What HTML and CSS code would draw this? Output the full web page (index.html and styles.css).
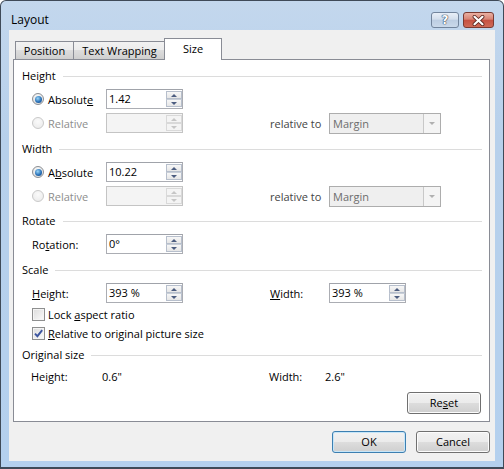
FILE: index.html
```html
<!DOCTYPE html>
<html>
<head>
<meta charset="utf-8">
<title>Layout</title>
<link rel="stylesheet" href="styles.css">
</head>
<body>
<div class="window">
  <div class="titlebar">
    <span class="title">Layout</span>
    <div class="caption">
      <span class="cbtn help">?</span>
      <span class="cbtn close"><svg width="13" height="11" viewBox="0 0 13 11"><path d="M2.5 1.8 L10.5 9.2 M10.5 1.8 L2.5 9.2" stroke="#5a2620" stroke-width="3.8" stroke-linecap="round"/><path d="M2.5 1.8 L10.5 9.2 M10.5 1.8 L2.5 9.2" stroke="#fff" stroke-width="2.2" stroke-linecap="round"/></svg></span>
    </div>
  </div>
  <div class="client">
    <div class="tabs">
      <div class="tab tab-pos">Position</div>
      <div class="tab tab-wrap">Text Wrapping</div>
      <div class="tab tab-size active">Size</div>
    </div>
    <div class="panel">
      <section class="group">
        <div class="ghead"><span>Height</span><i class="rule"></i></div>
        <div class="row">
          <label class="opt"><span class="radio on"></span><span>Absolut<u>e</u></span></label>
          <div class="spin"><span class="val">1.42</span><span class="sbtns"><span class="sb"><i class="up"></i></span><span class="sb"><i class="down"></i></span></span></div>
        </div>
        <div class="row">
          <label class="opt dis"><span class="radio off"></span><span>Relative</span></label>
          <div class="spin dis"><span class="val"></span><span class="sbtns"><span class="sb"><i class="up"></i></span><span class="sb"><i class="down"></i></span></span></div>
          <span class="rel">relative to</span>
          <div class="combo"><span class="ctext">Margin</span><span class="carrow"><i class="down"></i></span></div>
        </div>
      </section>

      <section class="group g-width">
        <div class="ghead"><span>Width</span><i class="rule"></i></div>
        <div class="row">
          <label class="opt"><span class="radio on"></span><span>A<u>b</u>solute</span></label>
          <div class="spin"><span class="val">10.22</span><span class="sbtns"><span class="sb"><i class="up"></i></span><span class="sb"><i class="down"></i></span></span></div>
        </div>
        <div class="row">
          <label class="opt dis"><span class="radio off"></span><span>Relative</span></label>
          <div class="spin dis"><span class="val"></span><span class="sbtns"><span class="sb"><i class="up"></i></span><span class="sb"><i class="down"></i></span></span></div>
          <span class="rel">relative to</span>
          <div class="combo"><span class="ctext">Margin</span><span class="carrow"><i class="down"></i></span></div>
        </div>
      </section>

      <section class="group g-rotate">
        <div class="ghead"><span>Rotate</span><i class="rule"></i></div>
        <div class="row">
          <label class="opt"><span>Ro<u>t</u>ation:</span></label>
          <div class="spin"><span class="val">0°</span><span class="sbtns"><span class="sb"><i class="up"></i></span><span class="sb"><i class="down"></i></span></span></div>
        </div>
      </section>

      <section class="group g-scale">
        <div class="ghead"><span>Scale</span><i class="rule"></i></div>
        <div class="row">
          <label class="opt"><span><u>H</u>eight:</span></label>
          <div class="spin"><span class="val">393 %</span><span class="sbtns"><span class="sb"><i class="up"></i></span><span class="sb"><i class="down"></i></span></span></div>
          <label class="rel plain-dark"><span><u>W</u>idth:</span></label>
          <div class="spin"><span class="val">393 %</span><span class="sbtns"><span class="sb"><i class="up"></i></span><span class="sb"><i class="down"></i></span></span></div>
        </div>
        <div class="crow">
          <span class="check"></span><span>Lock <u>a</u>spect ratio</span>
        </div>
        <div class="crow">
          <span class="check on"><svg width="11" height="11" viewBox="0 0 11 11"><path d="M2 5.6 L4.4 8.2 L9.2 2.2" fill="none" stroke="#3d56a0" stroke-width="1.9"/></svg></span><span><u>R</u>elative to original picture size</span>
        </div>
      </section>

      <section class="group g-orig">
        <div class="ghead"><span>Original size</span><i class="rule"></i></div>
        <div class="vrow">
          <span>Height:</span><span>0.6"</span><span>Width:</span><span>2.6"</span>
        </div>
      </section>

      <div class="reset-row"><button class="btn">Re<u>s</u>et</button></div>
    </div>
    <div class="footer">
      <button class="btn default">OK</button>
      <button class="btn">Cancel</button>
    </div>
  </div>
</div>
</body>
</html>
```

FILE: styles.css
```css
* { box-sizing: border-box; }

body {
  margin: 0;
  font-family: "Open Sans", "Noto Sans", sans-serif;
  font-size: 11px;
  color: #000;
  background: #fff;
}

.window {
  width: 504px;
  height: 469px;
  display: flex;
  flex-direction: column;
  background: linear-gradient(#c3d7ed, #b7d0eb 30%, #b4d0ee);
  border: 1px solid #3f4a58;
  border-bottom-width: 2px;
  border-radius: 6px 6px 0 0;
  padding: 0 8px 6px 8px;
}

/* ---------- title bar ---------- */
.titlebar {
  height: 29px;
  display: flex;
  justify-content: space-between;
  align-items: flex-start;
  padding: 11px 1px 0 2px;
}
.title {
  font-size: 12px;
  line-height: 16px;
  color: #000;
}
.caption {
  display: flex;
  gap: 4px;
}
.cbtn {
  height: 16px;
  border-radius: 3px;
  display: flex;
  align-items: center;
  justify-content: center;
}
.help {
  width: 28px;
  border: 1px solid #72849c;
  background: linear-gradient(#e8eff8, #d3deec 45%, #bccde2 50%, #cad9ea);
  color: #fff;
  font-family: "DejaVu Sans", sans-serif;
  font-weight: bold;
  font-size: 12px;
  line-height: 14px;
  text-shadow: 0 0 1px #2d3c55, 0 0 1px #2d3c55, 0 0 1px #2d3c55;
}
.close {
  width: 31px;
  border: 1px solid #7a3a32;
  background: linear-gradient(#eab0a3, #d78374 45%, #c65142 50%, #cf6a58);
}

/* ---------- client ---------- */
.client {
  flex: 1;
  background: #f0f0f0;
  display: flex;
  flex-direction: column;
  padding: 8px 5px 0 4px;
}

.tabs {
  display: flex;
  align-items: flex-end;
  height: 22px;
  margin-left: 2px;
  margin-bottom: -1px;
  z-index: 1;
}
.tab {
  height: 18px;
  margin-bottom: 1px;
  border: 1px solid #898c95;
  border-bottom: none;
  background: linear-gradient(#f2f2f2, #ebebeb 50%, #dddddd 50%, #cfcfcf);
  display: flex;
  align-items: center;
  justify-content: center;
  line-height: 16px;
}
.tab-pos { width: 59px; }
.tab-wrap { width: 93px; margin-left: -1px; }
.tab-size {
  width: 58px;
  margin-left: -2px;
  height: 22px;
  margin-bottom: 0;
  background: #fff;
  padding-bottom: 2px;
}

.panel {
  width: 477px;
  height: 363px;
  background: #fff;
  border: 1px solid #898c95;
  padding: 8px 7px 0 8px;
  display: flex;
  flex-direction: column;
}

/* ---------- groups ---------- */
.ghead {
  height: 16px;
  display: flex;
  align-items: center;
  gap: 7px;
  margin-bottom: 3px;
  line-height: 16px;
}
.rule {
  flex: 1;
  height: 1px;
  background: #dcdcdc;
  margin-top: 1px;
}
.g-width { margin-top: 6px; }
.g-rotate { margin-top: 5px; }
.g-scale { margin-top: 6px; }
.g-orig { margin-top: 4px; }

.row {
  display: grid;
  grid-template-columns: 74px 77px 87px 59px 112px;
  align-items: center;
  height: 24px;
  margin-left: 10px;
}
.opt {
  display: flex;
  align-items: center;
  gap: 4px;
  white-space: nowrap;
}
.opt.dis { color: #8d8d8d; }
.rel {
  grid-column: 4;
  color: #444;
  white-space: nowrap;
}
.plain-dark { color: #000; }
.row .combo, .row .rel + .spin { grid-column: 5; }

/* radio */
.radio {
  width: 12px;
  height: 12px;
  border-radius: 50%;
  border: 1px solid #8b8e93;
  background: radial-gradient(circle at 50% 35%, #fff, #dfdfdf 80%);
  display: flex;
  align-items: center;
  justify-content: center;
  flex: none;
}
.radio.on::after {
  content: "";
  width: 7px;
  height: 7px;
  border-radius: 50%;
  background: radial-gradient(circle at 40% 35%, #9ad6f8, #2a72b8 55%, #0f3f7c);
}
.radio.off {
  border-color: #c9c9c9;
  background: radial-gradient(circle at 50% 35%, #fafafa, #ececec 80%);
}

/* spin edit */
.spin {
  width: 77px;
  height: 20px;
  display: flex;
  border: 1px solid #abadb3;
  border-top-color: #a0a3aa;
  background: #fff;
}
.spin .val {
  flex: 1;
  padding-left: 2px;
  line-height: 18px;
}
.sbtns {
  width: 16px;
  display: flex;
  flex-direction: column;
  padding: 1px 0;
}
.sb {
  flex: 1;
  border: 1px solid #b7bfcc;
  background: linear-gradient(#f7f7f7, #e6e6e6);
  display: flex;
  align-items: center;
  justify-content: center;
}
.sb + .sb { border-top-color: #c9cfd8; }
.up, .down {
  width: 0;
  height: 0;
  border-left: 3px solid transparent;
  border-right: 3px solid transparent;
}
.up { border-bottom: 3px solid #4c5d80; }
.down { border-top: 3px solid #4c5d80; }

.spin.dis {
  background: #f4f4f4;
  border-color: #c4c4c4;
}
.spin.dis .sb {
  border-color: #d9d9d9;
  background: #f4f4f4;
}
.spin.dis .up { border-bottom-color: #c6c6c6; }
.spin.dis .down { border-top-color: #c6c6c6; }

/* combo */
.combo {
  width: 112px;
  height: 21px;
  display: flex;
  border: 1px solid #adadad;
  background: #efefef;
}
.ctext {
  flex: 1;
  color: #6d6d6d;
  padding-left: 3px;
  line-height: 19px;
}
.carrow {
  width: 17px;
  border-left: 1px solid #c8c8c8;
  background: #f4f4f4;
  display: flex;
  align-items: center;
  justify-content: center;
}
.carrow .down { border-top-color: #b0b0b0; }

/* checkboxes */
.crow {
  height: 19px;
  display: flex;
  align-items: center;
  gap: 3px;
  margin-left: 10px;
}
.check {
  width: 13px;
  height: 13px;
  border: 1px solid #8e8f8f;
  background: linear-gradient(135deg, #dcdcdc, #fbfbfb);
  box-shadow: inset 0 0 0 1px #f4f4f4;
  display: flex;
  align-items: center;
  justify-content: center;
}

/* original size */
.vrow {
  display: grid;
  grid-template-columns: 71px 167px 56px 60px;
  align-items: center;
  height: 20px;
  margin-left: 9px;
}

/* buttons */
.reset-row {
  display: flex;
  justify-content: flex-end;
  margin-top: 6px;
  margin-right: 1px;
}
.btn {
  width: 74px;
  height: 22px;
  border: 1px solid #707070;
  border-radius: 3px;
  background: linear-gradient(#f2f2f2, #ebebeb 50%, #dddddd 50%, #cfcfcf);
  box-shadow: inset 0 0 0 1px #fcfcfc;
  font-family: inherit;
  font-size: 11px;
  color: #000;
  padding: 0;
  line-height: 18px;
}
.btn.default {
  border-color: #3c7fb1;
  box-shadow: inset 0 0 0 1px #c6e6f9;
}
.footer {
  display: flex;
  justify-content: flex-end;
  gap: 10px;
  margin-top: 9px;
}
```
